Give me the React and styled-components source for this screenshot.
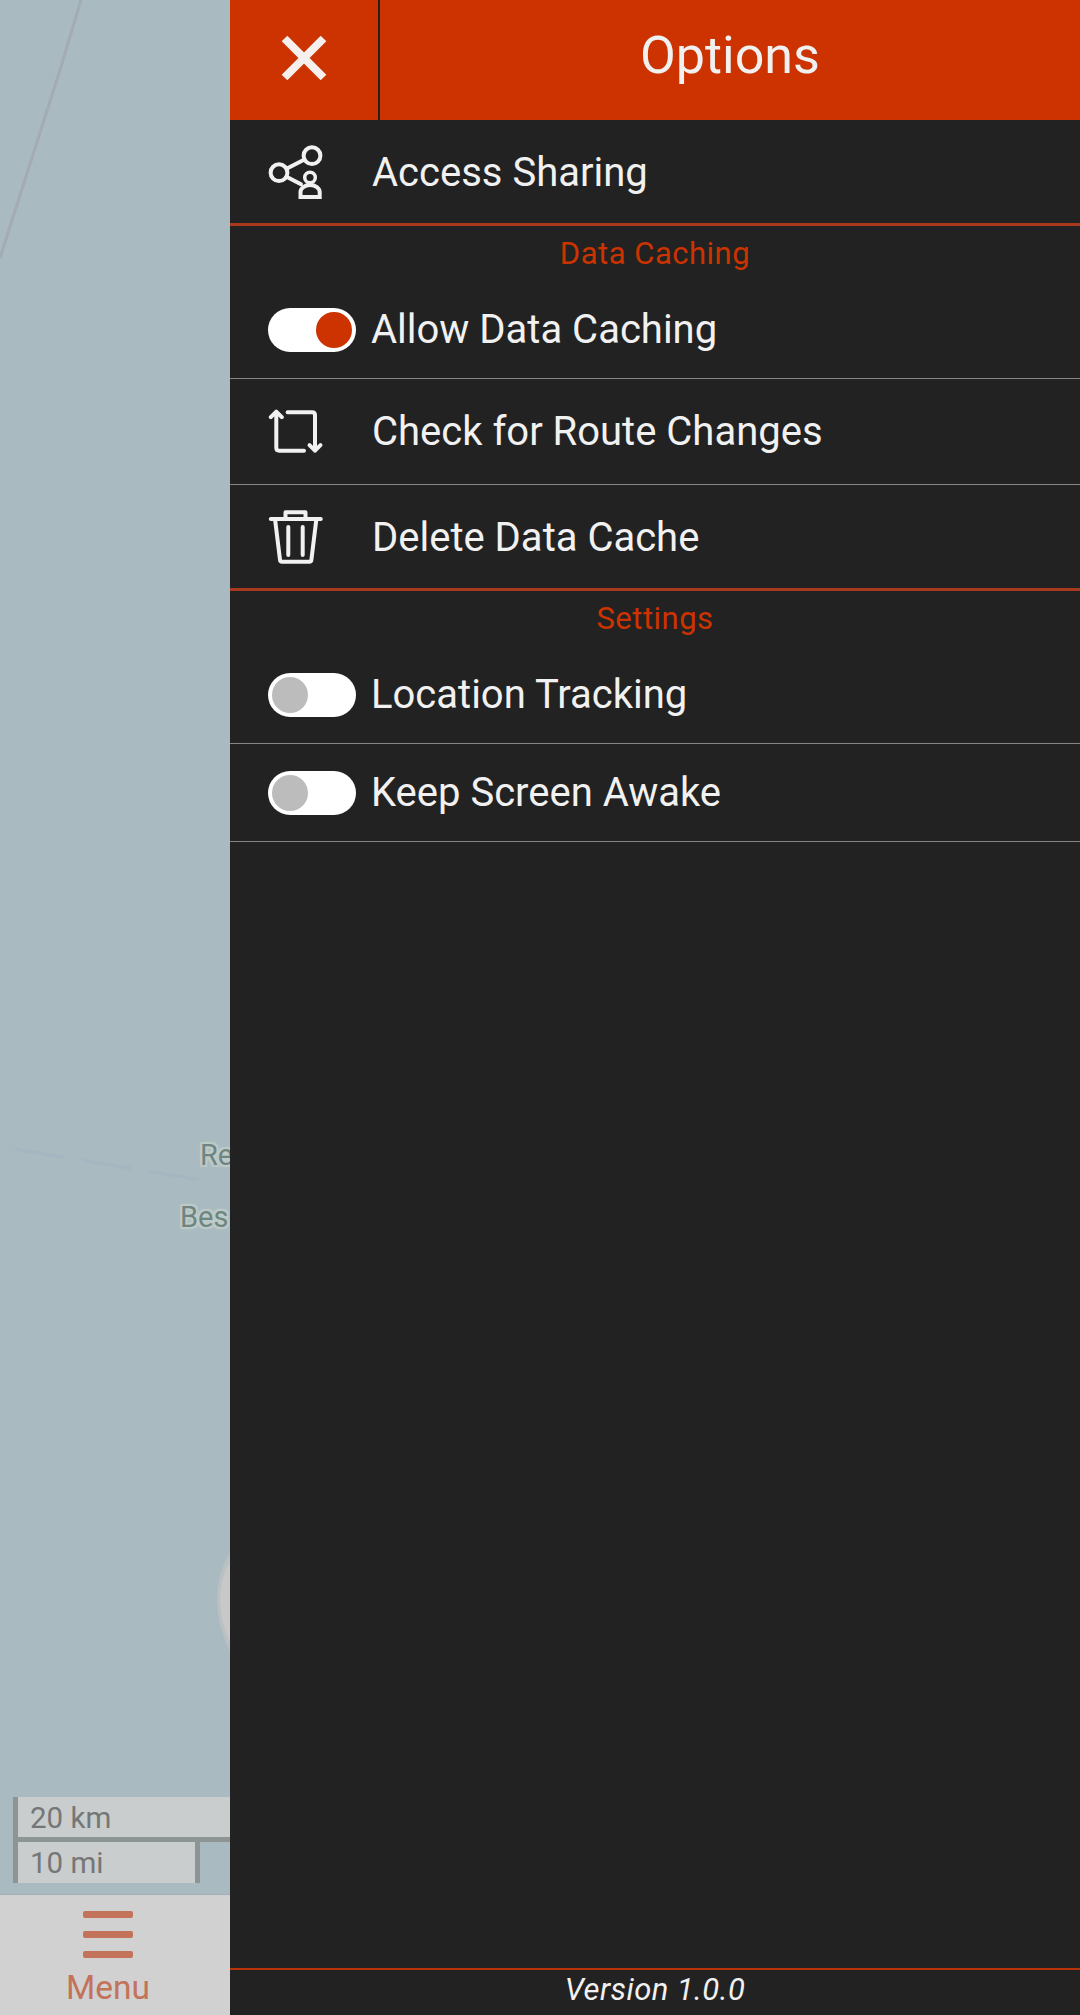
import React, { useState } from "react";
import styled, { createGlobalStyle } from "styled-components";

const Global = createGlobalStyle`
  * { box-sizing: border-box; }
  body { margin: 0; font-family: Roboto, "Liberation Sans", sans-serif; }
`;

const Screen = styled.div`
  position: relative;
  display: flex;
  width: 1080px;
  height: 2015px;
  overflow: hidden;
  background: #aabac1;
`;

const MapPane = styled.div`
  width: 230px;
  flex: none;
  display: flex;
  flex-direction: column;
  overflow: hidden;
`;

const MapArea = styled.div`
  position: relative;
  height: 1895px;
  flex: none;
  display: flex;
  flex-direction: column;
  justify-content: flex-end;
  padding: 0 0 11px 13px;
  border-bottom: 1px solid #a0b0b6;
`;

const MapDrawing = styled.svg`
  position: absolute;
  left: 0;
  top: 0;
`;

const PlaceLabel = styled.span`
  position: absolute;
  left: ${(p) => p.$x}px;
  top: ${(p) => p.$y}px;
  font-size: 29px;
  line-height: 34px;
  white-space: nowrap;
  color: #6e8582;
  text-shadow: 0 0 3px #c0ceca, 0 0 3px #c0ceca, 2px 2px 1px #bccac8, -2px -2px 1px #bccac8,
    2px -2px 1px #bccac8, -2px 2px 1px #bccac8;
`;

const ScaleBar = styled.div`
  position: relative;
  width: ${(p) => p.$width}px;
  height: ${(p) => p.$height}px;
  padding-left: 12px;
  line-height: 42px;
  font-size: 29.5px;
  color: #757777;
  background: #c9cdcd;
  border-left: 5px solid #8c9494;
  border-right: 5px solid #8c9494;
  border-bottom: ${(p) => (p.$divider ? "5px solid #8c9494" : "none")};
`;

const BottomBackground = styled.div`
  flex: 1;
  display: flex;
  background: #d2d1d1;
`;

const BottomBar = styled.div`
  flex: none;
  display: flex;
  flex-direction: column;
  align-items: center;
  width: 216px;
  padding-top: 16px;
  color: #c2735a;
  font-size: 33.5px;
`;

const Burger = styled.div`
  display: flex;
  flex-direction: column;
  gap: 13px;
  margin-bottom: 10px;
`;

const BurgerLine = styled.span`
  width: 50px;
  height: 7px;
  border-radius: 2px;
  background: #c2735a;
`;

const Drawer = styled.aside`
  flex: 1;
  display: flex;
  flex-direction: column;
  background: #222;
  color: #f1f1f1;
`;

const Header = styled.header`
  display: flex;
  height: 120px;
  background: #cc3300;
`;

const CloseButton = styled.button`
  width: 150px;
  padding: 0 0 4px 0;
  border: 0;
  border-right: 2px solid #222;
  background: none;
  display: flex;
  align-items: center;
  justify-content: center;
`;

const Title = styled.h1`
  flex: 1;
  margin: 0;
  font-size: 52px;
  font-weight: 400;
  line-height: 112px;
  text-align: center;
`;

const Row = styled.div`
  display: flex;
  align-items: center;
  height: ${(p) => (p.$toggle ? 98 : 106)}px;
  padding-left: 38px;
  padding-top: ${(p) => (p.$last ? 1 : 0)}px;
  border-bottom: ${(p) => (p.$last ? "3px solid #a8391c" : "1px solid #858585")};
  font-size: 40px;
`;

const Glyph = styled.svg`
  width: 56px;
  height: 56px;
  margin-right: 48px;
  fill: none;
  stroke: #f1f1f1;
  stroke-width: 4;
  stroke-linecap: round;
  stroke-linejoin: round;
`;

const Section = styled.h2`
  height: 55px;
  margin: 0;
  line-height: 55px;
  font-size: 31px;
  font-weight: 400;
  letter-spacing: 0.5px;
  text-align: center;
  color: #cc3300;
`;

const Track = styled.button`
  display: flex;
  justify-content: ${(p) => (p.$on ? "flex-end" : "flex-start")};
  width: 88px;
  height: 44px;
  margin: 0 15px 0 0;
  padding: 4px;
  border: 0;
  border-radius: 22px;
  background: #fff;
`;

const Knob = styled.span`
  width: 36px;
  height: 36px;
  border-radius: 50%;
  background: ${(p) => (p.$on ? "#cc3300" : "#bcbcbc")};
`;

const Footer = styled.footer`
  height: 47px;
  margin-top: auto;
  border-top: 2px solid #b83408;
  font-size: 31px;
  font-style: italic;
  line-height: 39px;
  letter-spacing: 0.4px;
  text-align: center;
`;

function ToggleRow({ label, initial = false }) {
  const [on, setOn] = useState(initial);
  return (
    <Row $toggle>
      <Track $on={on} role="switch" aria-checked={on} aria-label={label} onClick={() => setOn(!on)}>
        <Knob $on={on} />
      </Track>
      {label}
    </Row>
  );
}

const ShareIcon = () => (
  <Glyph viewBox="0 0 56 56">
    <circle cx="11" cy="28.7" r="8.4" />
    <circle cx="44" cy="11.7" r="8.4" />
    <path d="M19 24.5 35.5 16M19 33l14 7.2" />
    <circle cx="42" cy="33.5" r="5.3" strokeWidth="3.5" />
    <path d="M32.5 53V48a9.4 6.8 0 0 1 19.2 0v5z" strokeLinejoin="miter" />
  </Glyph>
);

const RouteIcon = () => (
  <Glyph viewBox="0 0 56 56">
    <path d="M36 46.7H11.2Q8.3 46.7 8.3 43.8V8M2.8 13.2 8.3 7.7l5.5 5.5" />
    <path d="M19.6 8.2h24.5Q47 8.2 47 11.1v35.6M41.5 41.2l5.5 5.5 5.5-5.5" />
  </Glyph>
);

const TrashIcon = () => (
  <Glyph viewBox="0 0 56 56">
    <path d="M2.8 10h50M17.5 9.8V3.2h20v6.6" />
    <path d="M7.2 11.5 12 50.8q.2 2 2 2h27.4q1.8 0 2-2L48.2 11.5" />
    <path d="M20.3 18v28M34.7 18v28" />
  </Glyph>
);

export default function App() {
  return (
    <Screen>
      <Global />
      <MapPane>
        <MapArea>
          <MapDrawing width="230" height="1894" fill="none">
            <path d="M81 0 60 70 0 258" stroke="#a3abb3" strokeWidth="3" />
            <path d="M15 1149 202 1180" stroke="#a6b6c0" strokeWidth="3" strokeDasharray="50 18" />
            <path d="M230 1551Q217 1575 217 1600Q218 1628 230 1652Z" fill="#b9c1c3" />
            <path d="M230 1561Q220 1579 220 1600Q221 1624 230 1642Z" fill="#c8c8c8" />
          </MapDrawing>
          <PlaceLabel $x={200} $y={1138}>Re</PlaceLabel>
          <PlaceLabel $x={180} $y={1200}>Bes</PlaceLabel>
          <ScaleBar $width={240} $height={45} $divider>20 km</ScaleBar>
          <ScaleBar $width={187} $height={41}>10 mi</ScaleBar>
        </MapArea>
        <BottomBackground>
          <BottomBar>
            <Burger>
              <BurgerLine />
              <BurgerLine />
              <BurgerLine />
            </Burger>
            Menu
          </BottomBar>
        </BottomBackground>
      </MapPane>
      <Drawer>
        <Header>
          <CloseButton aria-label="Close">
            <svg width="48" height="48" viewBox="0 0 48 48" stroke="#f5efed" strokeWidth="8">
              <path d="M4.5 4.5 43.5 43.5M43.5 4.5 4.5 43.5" />
            </svg>
          </CloseButton>
          <Title>Options</Title>
        </Header>
        <Row $last><ShareIcon />Access Sharing</Row>
        <Section>Data Caching</Section>
        <ToggleRow label="Allow Data Caching" initial />
        <Row><RouteIcon />Check for Route Changes</Row>
        <Row $last><TrashIcon />Delete Data Cache</Row>
        <Section>Settings</Section>
        <ToggleRow label="Location Tracking" />
        <ToggleRow label="Keep Screen Awake" />
        <Footer>Version 1.0.0</Footer>
      </Drawer>
    </Screen>
  );
}
